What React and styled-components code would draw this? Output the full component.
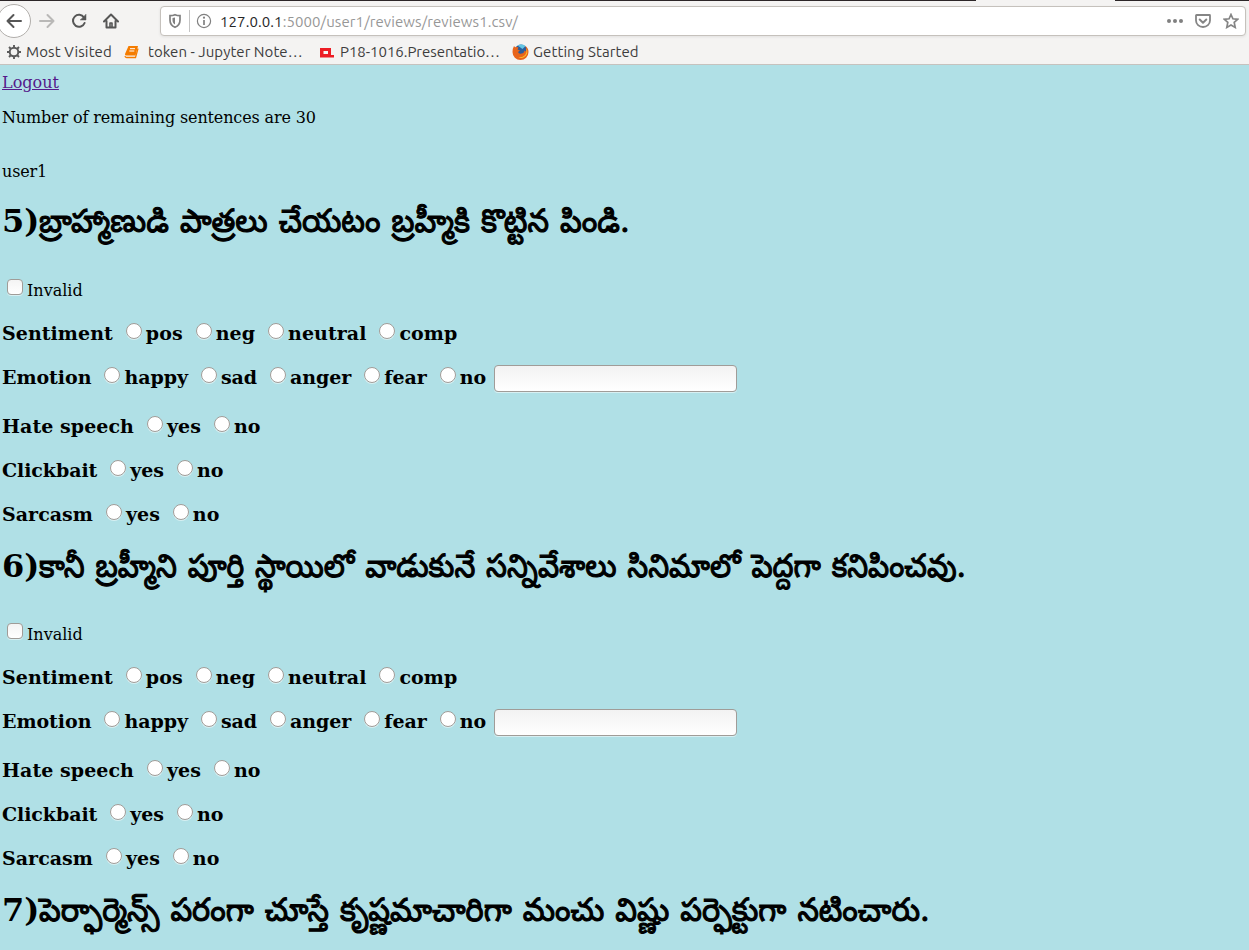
import React from "react";
import styled, { createGlobalStyle } from "styled-components";

const GlobalStyle = createGlobalStyle`
  * { box-sizing: border-box; }
  html, body { margin: 0; padding: 0; background: #b0e0e6; }
  body { height: 950px; overflow: hidden; }
`;

const Window = styled.div`
  width: 1249px;
  height: 950px;
  overflow: hidden;
  background: #b0e0e6;
`;

const Chrome = styled.header`
  height: 65px;
  background: #f4f3f2;
  border-bottom: 1px solid #c6c2be;
  font-family: Ubuntu, "Noto Sans", sans-serif;
  font-size: 15px;
  color: #3d3d3d;
`;

const TabEdge = styled.div`
  height: 1px;
  background: linear-gradient(90deg, #2c2628 976px, #f4f3f2 976px, #f4f3f2 1115px, #2c2628 1115px);
`;

const Toolbar = styled.div`
  display: flex;
  align-items: center;
  height: 40px;
`;

const BackButton = styled.button`
  display: flex;
  align-items: center;
  justify-content: center;
  flex: none;
  width: 34px;
  height: 34px;
  margin-left: -3px;
  padding: 0;
  border: 1px solid #b1aeab;
  border-radius: 50%;
  background: #fff;
`;

const ToolIcon = styled.svg`
  flex: none;
  width: 16px;
  height: 16px;
  margin-left: ${(p) => p.$gap}px;
  margin-right: ${(p) => p.$end || 0}px;
  fill: none;
  stroke: ${(p) => p.$tone || "#565656"};
  stroke-width: 2;
  stroke-linecap: round;
  stroke-linejoin: round;
`;

const UrlBar = styled.div`
  display: flex;
  align-items: center;
  width: 1086px;
  height: 30px;
  margin-left: 41px;
  border: 1px solid #c5c1bc;
  border-radius: 4px;
  background: #fff;
  box-shadow: 0 1px 3px rgba(0, 0, 0, 0.08);
`;

const BarIcon = styled.svg`
  flex: none;
  margin-left: ${(p) => p.$gap || 0}px;
`;

const Divider = styled.span`
  width: 1px;
  height: 22px;
  margin-left: 7px;
  background: #c4c4c4;
`;

const Url = styled.span`
  flex: 1;
  margin-left: 8px;
  color: #979797;
  white-space: nowrap;
  letter-spacing: 0.09px;
`;

const Host = styled.span`
  color: #262626;
`;

const Bookmarks = styled.div`
  display: flex;
  align-items: center;
  height: 22px;
  padding-left: 6px;
`;

const Bookmark = styled.div`
  display: flex;
  align-items: center;
  flex: none;
  width: ${(p) => p.$width}px;
  gap: ${(p) => p.$gap}px;
  letter-spacing: ${(p) => p.$track}px;
  white-space: nowrap;
  line-height: 22px;

  svg { flex: none; }
`;

const Page = styled.main`
  padding: 3px 0 0 2px;
  font-family: "DejaVu Serif", serif;
  font-size: 16px;
  color: #000;
`;

const Logout = styled.a`
  display: block;
  width: max-content;
  line-height: 30px;
  color: #551a8b;
  text-decoration: underline;
`;

const Line = styled.p`
  margin: 0 0 ${(p) => p.$after}px;
  line-height: 40px;
  letter-spacing: -0.13px;
`;

const Review = styled.section`
  height: ${(p) => (p.$first ? 345 : 344)}px;
`;

const Sentence = styled.h1`
  display: flex;
  height: 50px;
  margin: 0 0 ${(p) => (p.$first ? 28 : 27)}px;
  line-height: 50px;
  font-family: "DejaVu Serif", serif;
  font-size: 32px;
  font-weight: bold;
  white-space: nowrap;
`;

const Telugu = styled.span`
  transform: scaleX(${(p) => p.$stretch});
  transform-origin: 0 50%;
  font-family: "DejaVu Serif", "Noto Sans Telugu", serif;
  font-weight: 400;
  word-spacing: 1.4px;
  -webkit-text-stroke: 1.1px #000;
`;

const InvalidRow = styled.label`
  display: flex;
  align-items: center;
  height: 32px;
  margin-bottom: 5px;
  padding-left: 5px;
  gap: 4px;
`;

const Question = styled.div`
  display: flex;
  align-items: center;
  height: 44px;
  margin-bottom: ${(p) => p.$after || 0}px;
  font-family: "DejaVu Serif", serif;
  font-size: 19px;
  font-weight: bold;
  white-space: nowrap;
  letter-spacing: ${(p) => p.$track || 0}px;
`;

const Option = styled.label`
  display: flex;
  align-items: center;
  margin-left: 13px;
  gap: 4px;
`;

const Choice = styled.input`
  appearance: none;
  position: relative;
  top: ${(p) => (p.type === "radio" ? -2 : -3)}px;
  flex: none;
  width: 16px;
  height: 16px;
  margin: 0;
  border: 1px solid #a09c98;
  border-radius: ${(p) => (p.type === "radio" ? "50%" : "4px")};
  background: ${(p) => (p.type === "radio" ? "#fff" : "linear-gradient(#f4f4f4, #fff)")};
  box-shadow: 0 1px 0 rgba(255, 255, 255, 0.5);
`;

const Note = styled.input`
  width: 243px;
  height: 27px;
  margin: 3px 0 0 8px;
  border: 1px solid #a09c98;
  border-radius: 4px;
  background: linear-gradient(#f2f2f2, #fff);
  box-shadow: 0 1px 0 rgba(255, 255, 255, 0.5);
`;

const questions = [
  { name: "Sentiment", options: ["pos", "neg", "neutral", "comp"], track: 0.05 },
  { name: "Emotion", options: ["happy", "sad", "anger", "fear", "no"], note: true, after: 5, track: -0.05 },
  { name: "Hate speech", options: ["yes", "no"], track: 0.06 },
  { name: "Clickbait", options: ["yes", "no"], track: -0.07 },
  { name: "Sarcasm", options: ["yes", "no"], track: 0.03 },
];

const reviews = [
  { id: 5, text: "బ్రాహ్మాణుడి పాత్రలు చేయటం బ్రహ్మీకి కొట్టిన పిండి.", stretch: 0.957, first: true },
  { id: 6, text: "కానీ బ్రహ్మీని పూర్తి స్థాయిలో వాడుకునే సన్నివేశాలు సినిమాలో పెద్దగా కనిపించవు.", stretch: 0.929 },
  { id: 7, text: "పెర్ఫార్మెన్స్ పరంగా చూస్తే కృష్ణమాచారిగా మంచు విష్ణు పర్ఫెక్టుగా నటించారు.", stretch: 0.953, last: true },
];

function NavBar() {
  return (
    <Toolbar>
      <BackButton aria-label="Back">
        <ToolIcon $gap={0} viewBox="0 0 16 16"><path d="M15 8H1.5M7.5 2 1.5 8l6 6" /></ToolIcon>
      </BackButton>
      <ToolIcon $gap={8} $tone="#b9b8b7" viewBox="0 0 16 16"><path d="M1 8h13.5M8.5 2l6 6-6 6" /></ToolIcon>
      <ToolIcon $gap={16} viewBox="0 0 16 16">
        <path d="M13 4.5A6 6 0 1 0 13.6 10" />
        <path d="M15 1.5V7H9.5z" fill="#565656" strokeWidth="0.5" />
      </ToolIcon>
      <ToolIcon $gap={16} viewBox="0 0 16 16">
        <path d="M1 8.5 8 1.5l7 7M3.5 8v6.5h9V8" />
        <path d="M7 14v-4h2v4" strokeWidth="1.6" />
      </ToolIcon>
      <UrlBar>
        <BarIcon $gap={7} width="14" height="16" viewBox="0 0 14 16" fill="none">
          <path d="M7 1.7c1.5.7 3.2 1 5 1v4.2c0 3.6-2 6.2-5 7.4-3-1.2-5-3.8-5-7.4V2.7c1.8 0 3.5-.3 5-1z" stroke="#808080" strokeWidth="1.7" />
          <path d="M7 4.5v7C5.3 10.5 4.5 8.9 4.5 6.9V5.1C5.4 5 6.2 4.8 7 4.5z" fill="#808080" />
        </BarIcon>
        <Divider />
        <BarIcon $gap={6} width="16" height="16" viewBox="0 0 16 16" fill="none">
          <circle cx="8" cy="8" r="6.6" stroke="#808080" strokeWidth="1.2" />
          <path d="M8 7v5" stroke="#808080" strokeWidth="1.7" />
          <circle cx="8" cy="4.7" r="1.1" fill="#808080" />
        </BarIcon>
        <Url><Host>127.0.0.1</Host>:5000/user1/reviews/reviews1.csv/</Url>
        <BarIcon width="16" height="16" viewBox="0 0 16 16" fill="#808080">
          <circle cx="2" cy="8" r="2" /><circle cx="8" cy="8" r="2" /><circle cx="14" cy="8" r="2" />
        </BarIcon>
        <ToolIcon $gap={12} $tone="#858585" viewBox="0 0 16 16">
          <path d="M1.5 2h13a.5.5 0 0 1 .5.5V7.5a7 6.5 0 0 1-14 0V2.5a.5.5 0 0 1 .5-.5z" strokeWidth="1.8" />
          <path d="M4.7 6.5 8 9.7l3.3-3.2" />
        </ToolIcon>
        <ToolIcon $gap={12} $end={6} $tone="#858585" viewBox="0 0 16 16">
          <path d="m8 1.5 1.9 4.3 4.8.5-3.5 3.1 1 5L8 11.9l-4.2 2.5 1-5L1.3 6.3l4.8-.5z" strokeWidth="1.7" strokeLinejoin="miter" />
        </ToolIcon>
      </UrlBar>
    </Toolbar>
  );
}

function BookmarkBar() {
  return (
    <Bookmarks>
      <Bookmark $width={118} $gap={4} $track={0.13}>
        <svg width="16" height="16" viewBox="0 0 16 16" fill="none" stroke="#5b5b5b">
          <circle cx="8" cy="8" r="4.3" strokeWidth="2" />
          <path d="M8 1v3M8 12v3M1 8h3M12 8h3M3 3l2 2M11 11l2 2M3 13l2-2M11 5l2-2" strokeWidth="1.9" />
        </svg>
        Most Visited
      </Bookmark>
      <Bookmark $width={195} $gap={8} $track={0.04}>
        <svg width="16" height="16" viewBox="0 0 16 16">
          <path d="M4.5 2H14l-2.500 9.500H2.500q-2 0-1.500-1.500z" fill="#f57c00" />
          <path d="M6 4.700h5M5.300 7h5" stroke="#fff" strokeWidth="1" />
          <path d="M1 12q.2 1.500 1.500 1.500h9L14 4.500" fill="none" stroke="#f57c00" strokeWidth="1.3" />
        </svg>
        token - Jupyter Note…
      </Bookmark>
      <Bookmark $width={193} $gap={5} $track={-0.04}>
        <svg width="16" height="16" viewBox="0 0 16 16">
          <path d="M1 4h11v7h3v2.500H1zM4.500 7v3H9V7z" fill="#ed1c24" fillRule="evenodd" />
        </svg>
        P18-1016.Presentatio…
      </Bookmark>
      <Bookmark $width={130} $gap={4} $track={0.09}>
        <svg width="17" height="16" viewBox="0 0 16 16">
          <circle cx="8.5" cy="7" r="6.5" fill="#2b5c9b" />
          <path d="M5 1.500Q9-.5 13 2l-3 3z" fill="#62c5e4" />
          <path d="M1.500 2q.5 1 1.500 1.300Q5 2.500 6 3.500L5 5.500l2.500 1-2 1.500q1 2.500 3.500 1.500 2.500 0 3-3l1.500 1Q14.500 4 12.500 1.800 16 4 16 8A8 8 0 0 1 0 8Q0 4.500 1.500 2z" fill="#e8641b" />
          <path d="M14 4.500q2 4-1 7.500-3 3-7 1.500 5 0 7-3 1.500-2.500 1-6z" fill="#ffc328" />
        </svg>
        Getting Started
      </Bookmark>
    </Bookmarks>
  );
}

function ReviewForm({ review }) {
  return (
    <Review $first={review.first}>
      <Sentence $first={review.first}>
        {review.id})<Telugu $stretch={review.stretch}>{review.text}</Telugu>
      </Sentence>
      {!review.last && (
        <>
          <InvalidRow>
            <Choice type="checkbox" />
            Invalid
          </InvalidRow>
          {questions.map((q) => (
            <Question key={q.name} $after={q.after} $track={q.track}>
              {q.name}
              {q.options.map((o) => (
                <Option key={o}>
                  <Choice type="radio" name={`${q.name}-${review.id}`} />
                  {o}
                </Option>
              ))}
              {q.note && <Note type="text" />}
            </Question>
          ))}
        </>
      )}
    </Review>
  );
}

export default function App() {
  return (
    <Window>
      <GlobalStyle />
      <Chrome>
        <TabEdge />
        <NavBar />
        <BookmarkBar />
      </Chrome>
      <Page>
        <Logout href="#">Logout</Logout>
        <Line $after={14}>Number of remaining sentences are 30</Line>
        <Line $after={4}>user1</Line>
        {reviews.map((r) => (
          <ReviewForm key={r.id} review={r} />
        ))}
      </Page>
    </Window>
  );
}
